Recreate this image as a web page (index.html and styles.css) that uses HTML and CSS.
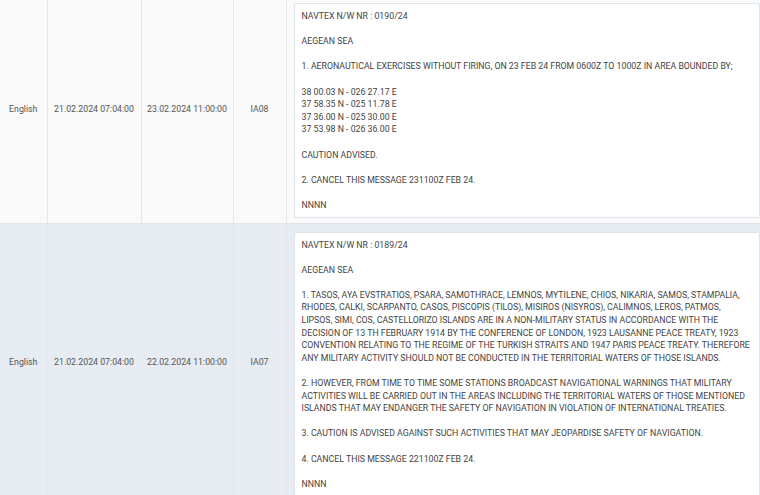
FILE: index.html
```html
<!DOCTYPE html>
<html lang="en">
<head>
<meta charset="utf-8">
<title>NAVTEX</title>
<link rel="stylesheet" href="styles.css">
</head>
<body>
<table class="grid">
  <colgroup>
    <col class="c-lang"><col class="c-date"><col class="c-date2"><col class="c-code"><col class="c-msg">
  </colgroup>
  <tbody>
    <tr class="row row-odd">
      <td class="cell">English</td>
      <td class="cell">21.02.2024 07:04:00</td>
      <td class="cell">23.02.2024 11:00:00</td>
      <td class="cell">IA08</td>
      <td class="cell cell-msg">
        <div class="msg">
          <p>NAVTEX N/W NR : 0190/24</p>
          <p>AEGEAN SEA</p>
          <p>1. AERONAUTICAL EXERCISES WITHOUT FIRING, ON 23 FEB 24 FROM 0600Z TO 1000Z IN AREA BOUNDED BY;</p>
          <p>38 00.03 N - 026 27.17 E<br>37 58.35 N - 025 11.78 E<br>37 36.00 N - 025 30.00 E<br>37 53.98 N - 026 36.00 E</p>
          <p>CAUTION ADVISED.</p>
          <p>2. CANCEL THIS MESSAGE 231100Z FEB 24.</p>
          <p>NNNN</p>
        </div>
      </td>
    </tr>
    <tr class="row row-even">
      <td class="cell">English</td>
      <td class="cell">21.02.2024 07:04:00</td>
      <td class="cell">22.02.2024 11:00:00</td>
      <td class="cell">IA07</td>
      <td class="cell cell-msg">
        <div class="msg">
          <p>NAVTEX N/W NR : 0189/24</p>
          <p>AEGEAN SEA</p>
          <p>1. TASOS, AYA EVSTRATIOS, PSARA, SAMOTHRACE, LEMNOS, MYTILENE, CHIOS, NIKARIA, SAMOS, STAMPALIA,<br>RHODES, CALKI, SCARPANTO, CASOS, PISCOPIS (TILOS), MISIROS (NISYROS), CALIMNOS, LEROS, PATMOS,<br>LIPSOS, SIMI, COS, CASTELLORIZO ISLANDS ARE IN A NON-MILITARY STATUS IN ACCORDANCE WITH THE<br>DECISION OF 13 TH FEBRUARY 1914 BY THE CONFERENCE OF LONDON, 1923 LAUSANNE PEACE TREATY, 1923<br>CONVENTION RELATING TO THE REGIME OF THE TURKISH STRAITS AND 1947 PARIS PEACE TREATY. THEREFORE<br>ANY MILITARY ACTIVITY SHOULD NOT BE CONDUCTED IN THE TERRITORIAL WATERS OF THOSE ISLANDS.</p>
          <p>2. HOWEVER, FROM TIME TO TIME SOME STATIONS BROADCAST NAVIGATIONAL WARNINGS THAT MILITARY<br>ACTIVITIES WILL BE CARRIED OUT IN THE AREAS INCLUDING THE TERRITORIAL WATERS OF THOSE MENTIONED<br>ISLANDS THAT MAY ENDANGER THE SAFETY OF NAVIGATION IN VIOLATION OF INTERNATIONAL TREATIES.</p>
          <p>3. CAUTION IS ADVISED AGAINST SUCH ACTIVITIES THAT MAY JEOPARDISE SAFETY OF NAVIGATION.</p>
          <p>4. CANCEL THIS MESSAGE 221100Z FEB 24.</p>
          <p>NNNN</p>
        </div>
      </td>
    </tr>
  </tbody>
</table>
</body>
</html>
```
FILE: styles.css
```css
html, body {
  margin: 0;
  padding: 0;
  background: #ffffff;
  overflow: hidden;
}
body {
  font-family: Roboto, "Liberation Sans", Arial, sans-serif;
  font-size: 8.75px;
  color: #444;
}
.grid {
  border-collapse: collapse;
  table-layout: fixed;
  width: 761px;
  margin-top: -5px;
}
.c-lang { width: 47px; }
.c-date { width: 94px; }
.c-date2 { width: 92px; }
.c-code { width: 53px; }
.c-msg { width: auto; }
.row-odd { background: #fafafa; }
.row-even { background: #e7ecf2; border-top: 1px solid #dfe5eb; }
.cell {
  border-right: 1px solid #e4e6e8;
  text-align: center;
  vertical-align: middle;
  padding: 0 2px;
  color: #555;
  white-space: nowrap;
}
.cell-msg {
  text-align: left;
  vertical-align: top;
  padding: 8px 1px 5px 7px;
  border-right: none;
}
.msg {
  background: #fff;
  border: 1px solid #dde3e8;
  border-radius: 2px;
  padding: 6px 7px 5px;
  color: #444;
  line-height: 12.6px;
  white-space: nowrap;
}
.msg p {
  margin: 0 0 12.6px;
}
.msg p:last-child {
  margin-bottom: 0;
}
```
